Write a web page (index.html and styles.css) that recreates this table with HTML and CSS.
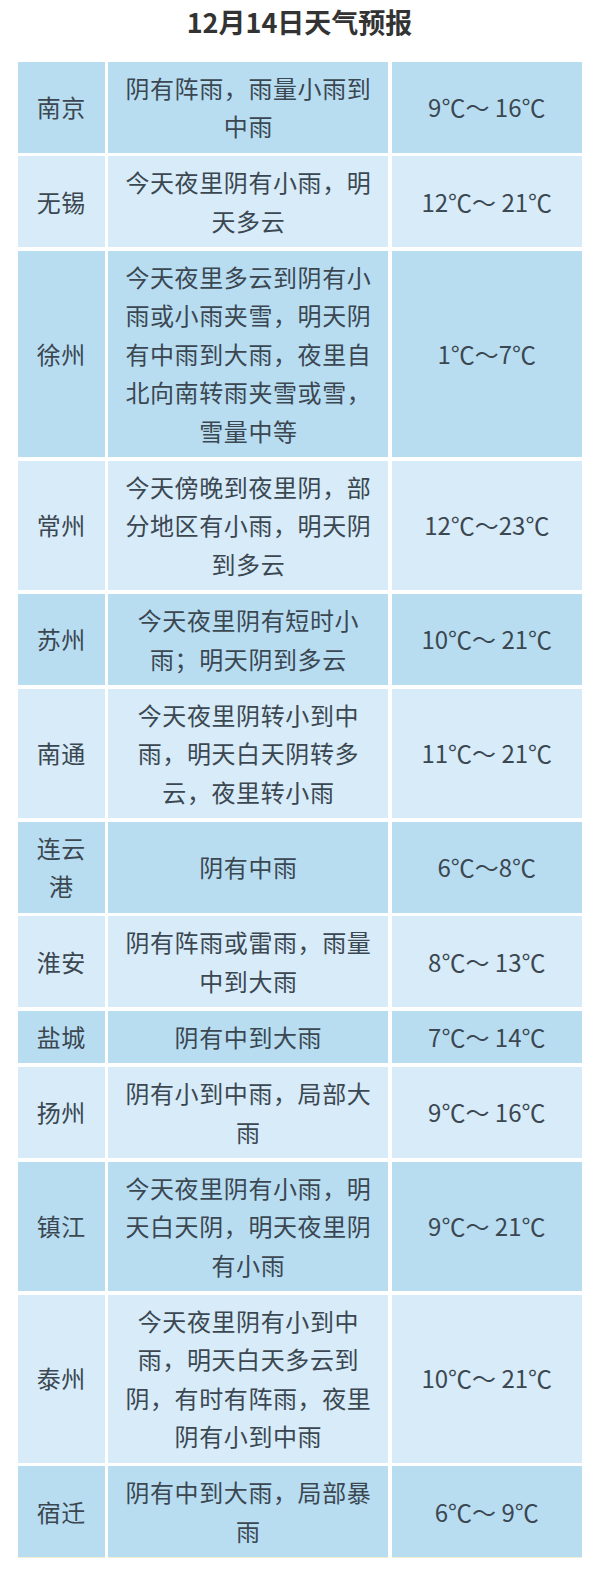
FILE: index.html
```html
<!DOCTYPE html>
<html lang="zh-CN">
<head>
<meta charset="utf-8">
<title>12月14日天气预报</title>
<link rel="stylesheet" href="styles.css">
</head>
<body>
<div class="page">
  <h1 class="title">12月14日天气预报</h1>
  <div class="table">
    <div class="cell city dark">南京</div><div class="cell desc dark">阴有阵雨，雨量小雨到中雨</div><div class="cell temp dark">9℃～ 16℃</div>
    <div class="cell city light">无锡</div><div class="cell desc light">今天夜里阴有小雨，明天多云</div><div class="cell temp light">12℃～ 21℃</div>
    <div class="cell city dark">徐州</div><div class="cell desc dark">今天夜里多云到阴有小雨或小雨夹雪，明天阴有中雨到大雨，夜里自北向南转雨夹雪或雪，雪量中等</div><div class="cell temp dark">1℃～7℃</div>
    <div class="cell city light">常州</div><div class="cell desc light">今天傍晚到夜里阴，部分地区有小雨，明天阴到多云</div><div class="cell temp light">12℃～23℃</div>
    <div class="cell city dark">苏州</div><div class="cell desc dark">今天夜里阴有短时小雨；明天阴到多云</div><div class="cell temp dark">10℃～ 21℃</div>
    <div class="cell city light">南通</div><div class="cell desc light">今天夜里阴转小到中雨，明天白天阴转多云，夜里转小雨</div><div class="cell temp light">11℃～ 21℃</div>
    <div class="cell city dark">连云港</div><div class="cell desc dark">阴有中雨</div><div class="cell temp dark">6℃～8℃</div>
    <div class="cell city light">淮安</div><div class="cell desc light">阴有阵雨或雷雨，雨量中到大雨</div><div class="cell temp light">8℃～ 13℃</div>
    <div class="cell city dark">盐城</div><div class="cell desc dark">阴有中到大雨</div><div class="cell temp dark">7℃～ 14℃</div>
    <div class="cell city light">扬州</div><div class="cell desc light">阴有小到中雨，局部大雨</div><div class="cell temp light">9℃～ 16℃</div>
    <div class="cell city dark">镇江</div><div class="cell desc dark">今天夜里阴有小雨，明天白天阴，明天夜里阴有小雨</div><div class="cell temp dark">9℃～ 21℃</div>
    <div class="cell city light">泰州</div><div class="cell desc light">今天夜里阴有小到中雨，明天白天多云到阴，有时有阵雨，夜里阴有小到中雨</div><div class="cell temp light">10℃～ 21℃</div>
    <div class="cell city dark last">宿迁</div><div class="cell desc dark last">阴有中到大雨，局部暴雨</div><div class="cell temp dark last">6℃～ 9℃</div>
  </div>
</div>
</body>
</html>
```

FILE: styles.css
```css
html, body {
  margin: 0;
  padding: 0;
  background: #ffffff;
}

.page {
  width: 600px;
  padding: 0 0 0 17.5px;
  box-sizing: border-box;
  font-family: "Noto Sans CJK SC", "Noto Sans", sans-serif;
}

.title {
  margin: 0;
  height: 61.7px;
  padding-top: 1px;
  box-sizing: border-box;
  width: 564px;
  text-align: center;
  font-size: 27px;
  line-height: 42px;
  font-weight: 700;
  color: #333333;
}

.table {
  display: grid;
  grid-template-columns: 87.5px 280px 190px;
  column-gap: 3.4px;
  row-gap: 3.6px;
  width: 564px;
}

.cell {
  display: flex;
  align-items: center;
  justify-content: center;
  text-align: center;
  padding: 7px 8px;
  font-size: 24px;
  line-height: 38.5px;
  letter-spacing: 0.6px;
  color: #3b4751;
  box-sizing: border-box;
}

.dark {
  background: #b8ddf1;
}

.light {
  background: #d7ebf8;
}

.temp {
  letter-spacing: 0;
}

.last {
  border-bottom: 1px solid #f1ecd2;
}
```
